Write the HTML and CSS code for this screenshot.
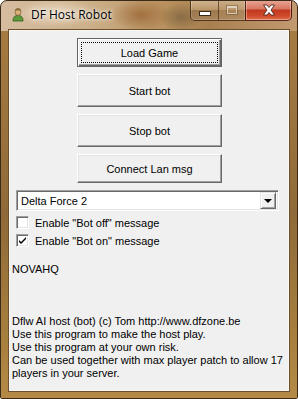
FILE: index.html
```html
<!DOCTYPE html>
<html>
<head>
<meta charset="utf-8">
<link rel="stylesheet" href="styles.css">
</head>
<body>
<div class="window">
  <div class="titlebar">
    <svg class="app-icon" width="16" height="16" viewBox="0 0 16 16">
      <path d="M3 15 C3 11 5 9.5 8 9.5 C11 9.5 13 11 13 15 Z" fill="#5c9a3c" stroke="#2f5a1c" stroke-width="0.8"/>
      <ellipse cx="8" cy="6" rx="3" ry="3.4" fill="#d8b27a" stroke="#7a5a2c" stroke-width="0.7"/>
      <path d="M5 4.5 C5.5 1.5 10.5 1.5 11 4.5 Z" fill="#8a6a3a"/>
    </svg>
    <span class="title">DF Host Robot</span>
    <div class="caption">
      <div class="cap-group">
        <div class="cap-btn cap-min"><span class="min-glyph"></span></div>
        <div class="cap-btn cap-max"><span class="max-glyph"></span></div>
      </div>
      <div class="cap-btn cap-close">
        <svg width="14" height="12" viewBox="0 0 14 12">
          <path d="M1.5 1 L5 1 L7 3.5 L9 1 L12.5 1 L9 6 L12.5 11 L9 11 L7 8.5 L5 11 L1.5 11 L5 6 Z" fill="#ffffff" stroke="#3a1a10" stroke-width="0.8"/>
        </svg>
      </div>
    </div>
  </div>
  <div class="client">
    <div class="btn-stack">
      <button class="btn btn-default"><span class="focus">Load Game</span></button>
      <button class="btn btn-tall">Start bot</button>
      <button class="btn btn-tall">Stop bot</button>
      <button class="btn">Connect Lan msg</button>
    </div>
    <div class="combo">
      <span class="combo-text">Delta Force 2</span>
      <span class="combo-arrow"><span class="tri"></span></span>
    </div>
    <div class="check-row">
      <span class="box"></span>
      <span class="check-label">Enable "Bot off" message</span>
    </div>
    <div class="check-row">
      <span class="box">
        <svg width="9" height="9" viewBox="0 0 9 9"><path d="M1 4 L3 6 L8 1 L8 3 L3 8 L1 6 Z" fill="#000"/></svg>
      </span>
      <span class="check-label">Enable "Bot on" message</span>
    </div>
    <div class="novahq">NOVAHQ</div>
    <div class="info">
      <div>Dflw AI host (bot) (c) Tom http://www.dfzone.be</div>
      <div>Use this program to make the host play.</div>
      <div>Use this program at your own risk.</div>
      <div>Can be used together with max player patch to allow 17</div>
      <div>players in your server.</div>
    </div>
  </div>
</div>
</body>
</html>
```

FILE: styles.css
```css
html, body {
  margin: 0;
  padding: 0;
  background: #ffffff;
}

.window {
  width: 298px;
  height: 399px;
  box-sizing: border-box;
  border: 1px solid #3a2a18;
  border-radius: 7px 7px 2px 2px;
  background:
    radial-gradient(ellipse 40px 14px at 55px 12px, rgba(240, 225, 205, 0.8), rgba(240, 225, 205, 0) 100%),
    radial-gradient(ellipse 30px 16px at 140px 14px, rgba(150, 95, 45, 0.7), rgba(150, 95, 45, 0) 100%),
    radial-gradient(ellipse 22px 14px at 180px 16px, rgba(120, 95, 60, 0.7), rgba(120, 95, 60, 0) 100%),
    linear-gradient(90deg, #d6bda0 0%, #ccb08a 30%, #b8915e 55%, #a88050 70%, #c19a70 100%);
  display: flex;
  flex-direction: column;
  font-family: "Liberation Sans", Arial, sans-serif;
  overflow: hidden;
  position: relative;
}

.window::after {
  content: "";
  position: absolute;
  left: 0;
  right: 0;
  top: 30px;
  bottom: 0;
  background: linear-gradient(180deg, #a57b42 0%, #8f6a38 50%, #a8803f 85%, #b48a45 100%);
  z-index: 0;
}

.titlebar {
  height: 28px;
  display: flex;
  align-items: center;
  position: relative;
  z-index: 1;
}

.app-icon {
  margin-left: 9px;
  margin-top: -2px;
}

.title {
  margin-left: 5px;
  margin-top: -2px;
  font-family: "Open Sans", "Noto Sans", sans-serif;
  font-size: 12px;
  color: #000;
  text-shadow: 0 0 6px rgba(255, 255, 255, 0.9), 0 0 3px rgba(255, 255, 255, 0.9);
}

.caption {
  position: absolute;
  top: -1px;
  right: 5px;
  display: flex;
  height: 21px;
}

.cap-group {
  display: flex;
  border: 1px solid rgba(50, 30, 15, 0.75);
  border-top: none;
  border-right: none;
  border-radius: 0 0 0 5px;
  overflow: hidden;
  box-shadow: inset 0 0 0 1px rgba(255, 255, 255, 0.35);
}

.cap-btn {
  display: flex;
  align-items: center;
  justify-content: center;
  box-sizing: border-box;
  height: 20px;
}

.cap-min {
  width: 28px;
  background: linear-gradient(180deg, rgba(235, 215, 190, 0.6) 0%, rgba(200, 170, 130, 0.5) 50%, rgba(150, 115, 75, 0.6) 51%, rgba(170, 135, 95, 0.6) 100%);
  border-right: 1px solid rgba(50, 30, 15, 0.6);
}

.cap-max {
  width: 26px;
  background: linear-gradient(180deg, rgba(235, 215, 190, 0.5) 0%, rgba(200, 170, 130, 0.45) 50%, rgba(160, 125, 85, 0.5) 51%, rgba(175, 140, 100, 0.5) 100%);
}

.min-glyph {
  width: 10px;
  height: 3px;
  background: #fff;
  border: 1px solid #3a2a1a;
  margin-top: 6px;
}

.max-glyph {
  width: 8px;
  height: 5px;
  border: 1px solid rgba(255, 255, 255, 0.55);
  border-top-width: 2px;
  box-shadow: 0 0 0 1px rgba(80, 55, 30, 0.35);
}

.cap-close {
  width: 47px;
  height: 21px;
  border: 1px solid rgba(60, 15, 10, 0.85);
  border-top: none;
  border-radius: 0 0 5px 0;
  background: linear-gradient(180deg, #e8a898 0%, #d67560 45%, #c0381e 50%, #cf4a2a 80%, #e07050 100%);
  box-shadow: inset 0 0 0 1px rgba(255, 220, 200, 0.45);
}

.client {
  position: relative;
  z-index: 1;
  margin: 0 7px 6px 7px;
  flex: 1;
  border: 1px solid #6b5030;
  background: #f0f0f0;
  box-shadow: inset 0 0 0 1px #fbf8f2;
  font-family: "Liberation Sans", Arial, sans-serif;
  font-size: 11px;
  color: #000;
  display: flex;
  flex-direction: column;
}

.btn-stack {
  display: flex;
  flex-direction: column;
  gap: 7px;
  padding: 8px 0 0 68px;
}

.btn {
  width: 145px;
  height: 29px;
  box-sizing: border-box;
  background: #f0f0f0;
  border: 1px solid;
  border-color: #ffffff #696969 #696969 #ffffff;
  box-shadow: inset -1px -1px 0 #a0a0a0, inset 1px 1px 0 #e3e3e3;
  font-family: "Liberation Sans", Arial, sans-serif;
  font-size: 11px;
  color: #000;
  padding: 0;
  margin: 0;
  display: flex;
  align-items: center;
  justify-content: center;
}

.btn-tall {
  height: 33px;
}

.btn-default {
  border: 1px solid #646464;
  box-shadow: inset 1px 1px 0 #ffffff, inset -1px -1px 0 #696969, inset -2px -2px 0 #a0a0a0;
  padding: 3px;
}

.focus {
  flex: 1;
  align-self: stretch;
  display: flex;
  align-items: center;
  justify-content: center;
  border: 1px dotted #000;
}

.combo {
  margin: 7px 10px 0 7px;
  height: 21px;
  box-sizing: border-box;
  border: 1px solid;
  border-color: #a0a0a0 #ffffff #ffffff #a0a0a0;
  box-shadow: inset 1px 1px 0 #696969, inset -1px -1px 0 #e3e3e3;
  background: #ffffff;
  display: flex;
  align-items: center;
  padding: 2px;
}

.combo-text {
  flex: 1;
  padding-left: 2px;
  font-size: 11px;
}

.combo-arrow {
  width: 16px;
  height: 17px;
  box-sizing: border-box;
  background: #f0f0f0;
  border: 1px solid;
  border-color: #e3e3e3 #696969 #696969 #e3e3e3;
  box-shadow: inset 1px 1px 0 #ffffff, inset -1px -1px 0 #a0a0a0;
  display: flex;
  align-items: center;
  justify-content: center;
}

.tri {
  width: 0;
  height: 0;
  border-left: 4px solid transparent;
  border-right: 4px solid transparent;
  border-top: 4px solid #000;
  margin-top: 1px;
}

.check-row {
  display: flex;
  align-items: center;
  margin-left: 7px;
  height: 13px;
  margin-top: 5px;
}

.check-row + .check-row {
  margin-top: 5px;
}

.box {
  width: 13px;
  height: 13px;
  box-sizing: border-box;
  border: 1px solid;
  border-color: #a0a0a0 #ffffff #ffffff #a0a0a0;
  box-shadow: inset 1px 1px 0 #696969, inset -1px -1px 0 #e3e3e3;
  background: #fff;
  display: flex;
  align-items: center;
  justify-content: center;
}

.check-label {
  margin-left: 6px;
  font-size: 11px;
}

.novahq {
  margin: 16px 0 0 3px;
  font-size: 11px;
  line-height: 13px;
}

.info {
  margin: 39px 0 0 3px;
  font-size: 11px;
  line-height: 13px;
}
```
